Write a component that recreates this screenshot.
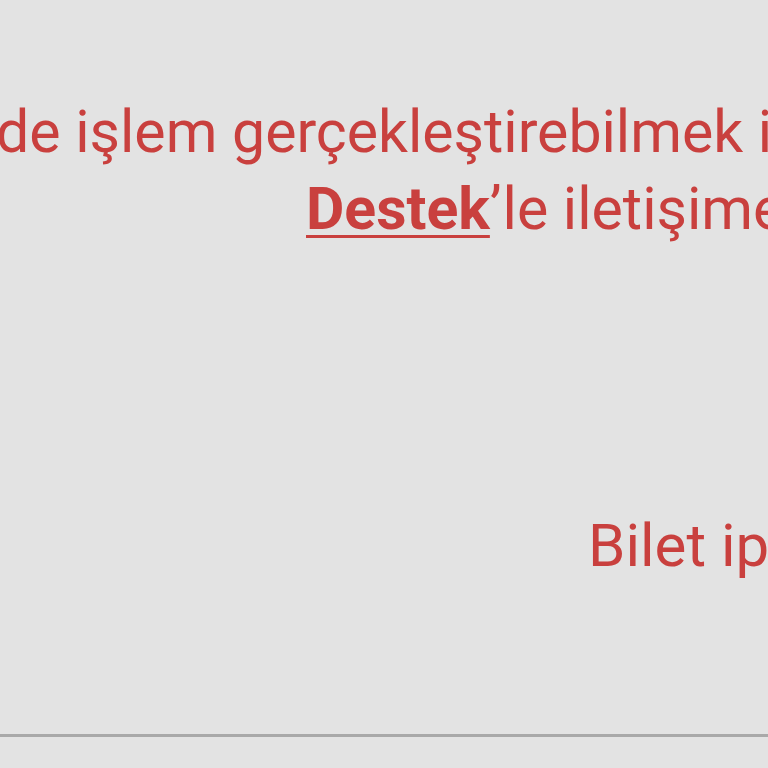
export default function App() {
  return (
    <div className="relative h-[768px] w-[768px] overflow-hidden bg-[#e3e3e3] font-['Roboto',sans-serif] text-[#c9403e]">
      <div className="pt-[93px]">
        <p className="ml-[-4px] whitespace-nowrap text-[59px] leading-[77px]">
          de işlem gerçekleştirebilmek için lütfen
        </p>
        <p className="ml-[306px] whitespace-nowrap text-[59px] leading-[77px]">
          <a className="font-bold underline decoration-[3px] underline-offset-[6px]">Destek</a>’le iletişime geçin.
        </p>
      </div>
      <div className="mt-[260px] ml-[588px] whitespace-nowrap text-[60px] leading-[78px]">Bilet iptal</div>
      <div className="absolute left-0 right-0 top-[734px] h-[3px] bg-[#a9a9a9]" />
    </div>
  );
}
